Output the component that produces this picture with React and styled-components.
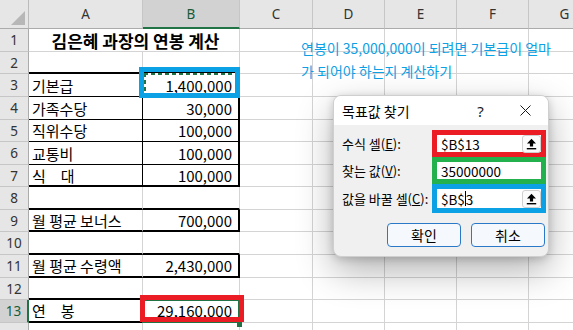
import styled, { createGlobalStyle } from 'styled-components';

const GlobalStyle = createGlobalStyle`
  html, body { margin: 0; padding: 0; background: #ffffff; overflow: hidden; }
`;

const FONT = `"Noto Sans CJK KR", "Noto Sans", sans-serif`;
const GRID = '#d4d4d4';
const GREEN = '#217346';

const colWidths = [29, 114, 97, 73, 72, 72, 72, 72];
const letters = ['A', 'B', 'C', 'D', 'E', 'F', 'G'];
const rowHeights = [23, 22, 23, 23, 22, 23, 22, 23, 22, 23, 23, 22, 23, 23];

const rows = [
  { n: 1, title: '김은혜 과장의 연봉 계산' },
  { n: 2, bb: 'thick' },
  { n: 3, a: '기본급', b: '1,400,000', bb: 'thin', inner: true, mark: 'copy' },
  { n: 4, a: '가족수당', b: '30,000', bb: 'thin', inner: true },
  { n: 5, a: '직위수당', b: '100,000', bb: 'thin', inner: true },
  { n: 6, a: '교통비', b: '100,000', bb: 'thin', inner: true },
  { n: 7, a: '식\u2003대', b: '100,000', bb: 'thick', inner: true },
  { n: 8, bb: 'thick' },
  { n: 9, a: '월 평균 보너스', b: '700,000', bb: 'thick', box: true },
  { n: 10, bb: 'thick' },
  { n: 11, a: '월 평균 수령액', b: '2,430,000', bb: 'thick', box: true },
  { n: 12, bb: 'thick' },
  { n: 13, a: '연\u2003봉', b: '29,160,000', bb: 'thick', box: true, mark: 'active' },
  // row 14 is cut off by the window, its number isn't visible
  { n: '' },
];

const borderFor = (kind) => {
  if (kind === 'thick') return '2px solid #000';
  if (kind === 'thin') return '1px solid #000';
  return `1px solid ${GRID}`;
};

export default function App() {
  return (
    <Sheet>
      <GlobalStyle />
      <Grid>
        <Corner>
          <svg width="14" height="14" viewBox="0 0 14 14">
            <polygon points="14,0 14,14 0,14" fill="#b7b7b7" />
          </svg>
        </Corner>
        {letters.map((l) => (
          <ColHead key={l} $selected={l === 'B'}>{l}</ColHead>
        ))}

        {rows.map((r, i) => (
          <Row key={i} r={r} />
        ))}
      </Grid>

      <NoteBox>
        연봉이 35,000,000이 되려면 기본급이 얼마
        <br />
        가 되어야 하는지 계산하기
      </NoteBox>

      <GoalSeekDialog />
    </Sheet>
  );
}

function Row({ r }) {
  const selected = r.mark === 'active';
  return (
    <>
      <RowHead $selected={selected}>{r.n}</RowHead>
      {r.title ? (
        <Cell $span={2} $center $bold>{r.title}</Cell>
      ) : (
        <>
          <Cell $bb={r.bb} $br={r.inner ? 'thin' : undefined}>{r.a}</Cell>
          <Cell $bb={r.bb} $br={r.inner || r.box ? 'thick' : undefined} $right>
            {r.b}
            {r.mark === 'copy' && (
              <>
                <CopyAnts />
                <Callout $color="#0ca0e4" style={{ top: -7, left: -4, right: -2, bottom: -2 }} />
              </>
            )}
            {r.mark === 'active' && (
              <>
                <ActiveFrame />
                <Callout $color="#ec1c24" style={{ top: -5, left: -3, right: -6, bottom: -1 }} />
                <FillHandle />
              </>
            )}
          </Cell>
        </>
      )}
      {letters.slice(2).map((l) => (
        <Cell key={l} />
      ))}
    </>
  );
}

function GoalSeekDialog() {
  return (
    <Dialog>
      <TitleBar>
        <Title>목표값 찾기</Title>
        <TitleButton>?</TitleButton>
        <TitleButton>
          <svg width="11" height="11" viewBox="0 0 11 11">
            <path d="M0.5 0.5 L10.5 10.5 M10.5 0.5 L0.5 10.5" stroke="#1a1a1a" strokeWidth="1" />
          </svg>
        </TitleButton>
      </TitleBar>
      <Body>
        <Fields>
          <Label>수식 셀(<u>E</u>):</Label>
          <Frame $color="#ec1c24">
            <Input>$B$13</Input>
            <RefButton><RefIcon /></RefButton>
          </Frame>

          <Label>찾는 값(<u>V</u>):</Label>
          <Frame $color="#22b14c">
            <Input>35000000</Input>
          </Frame>

          <Label>값을 바꿀 셀(<u>C</u>):</Label>
          <Frame $color="#0ca0e4" $tall>
            <Input>$B$<Caret />3</Input>
            <RefButton><RefIcon /></RefButton>
          </Frame>
        </Fields>
        <Buttons>
          <DialogButton>확인</DialogButton>
          <DialogButton>취소</DialogButton>
        </Buttons>
      </Body>
    </Dialog>
  );
}

function RefIcon() {
  return (
    <svg width="11" height="12" viewBox="0 0 11 12">
      <path d="M5.5 0.8 L10 5.4 L7.1 5.4 L7.1 8.6 L3.9 8.6 L3.9 5.4 L1 5.4 Z" fill="#000" />
      <rect x="0.8" y="10" width="9.4" height="1.4" fill="#000" />
    </svg>
  );
}

const Sheet = styled.div`
  position: relative;
  width: 573px;
  height: 330px;
  overflow: hidden;
  background: #ffffff;
  font-family: ${FONT};
`;

const Grid = styled.div`
  display: grid;
  grid-template-columns: ${colWidths.map((w) => `${w}px`).join(' ')};
  grid-template-rows: 29px ${rowHeights.map((h) => `${h}px`).join(' ')};
`;

const Corner = styled.div`
  background: #e6e6e6;
  border-right: 1px solid #bcbcbc;
  border-bottom: 1px solid #ababab;
  display: flex;
  align-items: flex-end;
  justify-content: flex-end;
  padding: 0 3px 3px 0;
  box-sizing: border-box;
`;

const ColHead = styled.div`
  box-sizing: border-box;
  display: flex;
  align-items: center;
  justify-content: center;
  font-family: "Noto Sans", sans-serif;
  font-size: 13.5px;
  color: ${(p) => (p.$selected ? '#185c37' : '#333')};
  background: ${(p) => (p.$selected ? '#d2d2d2' : '#e6e6e6')};
  border-right: 1px solid #c6c6c6;
  border-bottom: ${(p) => (p.$selected ? `2px solid ${GREEN}` : '1px solid #ababab')};
`;

const RowHead = styled.div`
  box-sizing: border-box;
  display: flex;
  align-items: center;
  justify-content: center;
  font-family: "Noto Sans", sans-serif;
  font-size: 13.5px;
  color: ${(p) => (p.$selected ? '#185c37' : '#333')};
  background: ${(p) => (p.$selected ? '#d2d2d2' : '#e6e6e6')};
  border-bottom: 1px solid #c6c6c6;
  border-right: ${(p) => (p.$selected ? `2px solid ${GREEN}` : '1px solid #ababab')};
`;

const Cell = styled.div`
  position: relative;
  box-sizing: border-box;
  display: flex;
  align-items: center;
  justify-content: ${(p) => (p.$center ? 'center' : p.$right ? 'flex-end' : 'flex-start')};
  grid-column: ${(p) => (p.$span ? `span ${p.$span}` : 'auto')};
  padding: ${(p) => (p.$right ? '0 6px 0 0' : '0 0 0 3px')};
  font-size: ${(p) => (p.$bold ? '17px' : '15px')};
  font-weight: ${(p) => (p.$bold ? 700 : 400)};
  color: #000;
  white-space: pre;
  border-right: ${(p) => borderFor(p.$br)};
  border-bottom: ${(p) => borderFor(p.$bb)};
`;

const Callout = styled.div`
  position: absolute;
  border: 5px solid ${(p) => p.$color};
  z-index: 3;
  pointer-events: none;
`;

const CopyAnts = styled.div`
  position: absolute;
  top: -1px;
  left: 1px;
  right: 0;
  bottom: 0;
  z-index: 2;
  background:
    repeating-linear-gradient(90deg, ${GREEN} 0 4px, #fff 4px 7px) top / 100% 2px no-repeat,
    repeating-linear-gradient(180deg, ${GREEN} 0 4px, #fff 4px 7px) left / 2px 100% no-repeat;
`;

const ActiveFrame = styled.div`
  position: absolute;
  top: -1px;
  left: -1px;
  right: -2px;
  bottom: -2px;
  border: 2px solid ${GREEN};
  z-index: 2;
`;

const FillHandle = styled.div`
  position: absolute;
  right: -4px;
  bottom: -6px;
  width: 5px;
  height: 5px;
  background: ${GREEN};
  z-index: 4;
`;

const NoteBox = styled.div`
  position: absolute;
  left: 301px;
  top: 37px;
  width: 270px;
  font-size: 14px;
  line-height: 23px;
  color: #0ca0e4;
  white-space: nowrap;
`;

const Dialog = styled.div`
  position: absolute;
  left: 333px;
  top: 95px;
  width: 216px;
  height: 162px;
  box-sizing: border-box;
  display: flex;
  flex-direction: column;
  background: #f0f0f0;
  border: 1px solid #cfcfcf;
  border-radius: 8px;
  overflow: hidden;
  box-shadow: 0 14px 36px rgba(0, 0, 0, 0.3), 0 2px 8px rgba(0, 0, 0, 0.18);
  z-index: 10;
`;

const TitleBar = styled.div`
  height: 29px;
  flex: none;
  display: flex;
  align-items: center;
  padding-left: 8px;
  background: #ffffff;
`;

const Title = styled.div`
  flex: 1;
  font-size: 14px;
  color: #000;
`;

const TitleButton = styled.div`
  width: 45px;
  height: 29px;
  display: flex;
  align-items: center;
  justify-content: center;
  font-family: "Noto Sans", sans-serif;
  font-size: 15px;
  color: #1a1a1a;
`;

const Body = styled.div`
  display: flex;
  flex-direction: column;
  padding: 5px 2px 0 8px;
`;

const Fields = styled.div`
  display: grid;
  grid-template-columns: 1fr 114px;
  align-items: center;
`;

const Label = styled.div`
  font-size: 13px;
  color: #000;
  white-space: nowrap;
`;

const Frame = styled.div`
  box-sizing: border-box;
  height: ${(p) => (p.$tall ? '29px' : '27px')};
  border: 5px solid ${(p) => p.$color};
  background: #ffffff;
  display: flex;
  align-items: center;
`;

const Input = styled.div`
  flex: 1;
  display: flex;
  align-items: center;
  padding-left: 4px;
  font-size: 13.5px;
  color: #000;
`;

const Caret = styled.span`
  display: inline-block;
  width: 1px;
  height: 15px;
  background: #000;
`;

const RefButton = styled.div`
  box-sizing: border-box;
  width: 19px;
  height: 18px;
  display: flex;
  align-items: center;
  justify-content: center;
  background: #fbfbfb;
  border: 1px solid #d0d0d0;
  border-radius: 3px;
`;

const Buttons = styled.div`
  display: flex;
  justify-content: flex-end;
  gap: 10px;
  margin-top: 10px;
  padding-right: 1px;
`;

const DialogButton = styled.div`
  box-sizing: border-box;
  width: 74px;
  height: 24px;
  display: flex;
  align-items: center;
  justify-content: center;
  font-size: 14px;
  color: #000;
  background: #f5f9fd;
  border: 1px solid #2a78c8;
  border-radius: 4px;
`;
